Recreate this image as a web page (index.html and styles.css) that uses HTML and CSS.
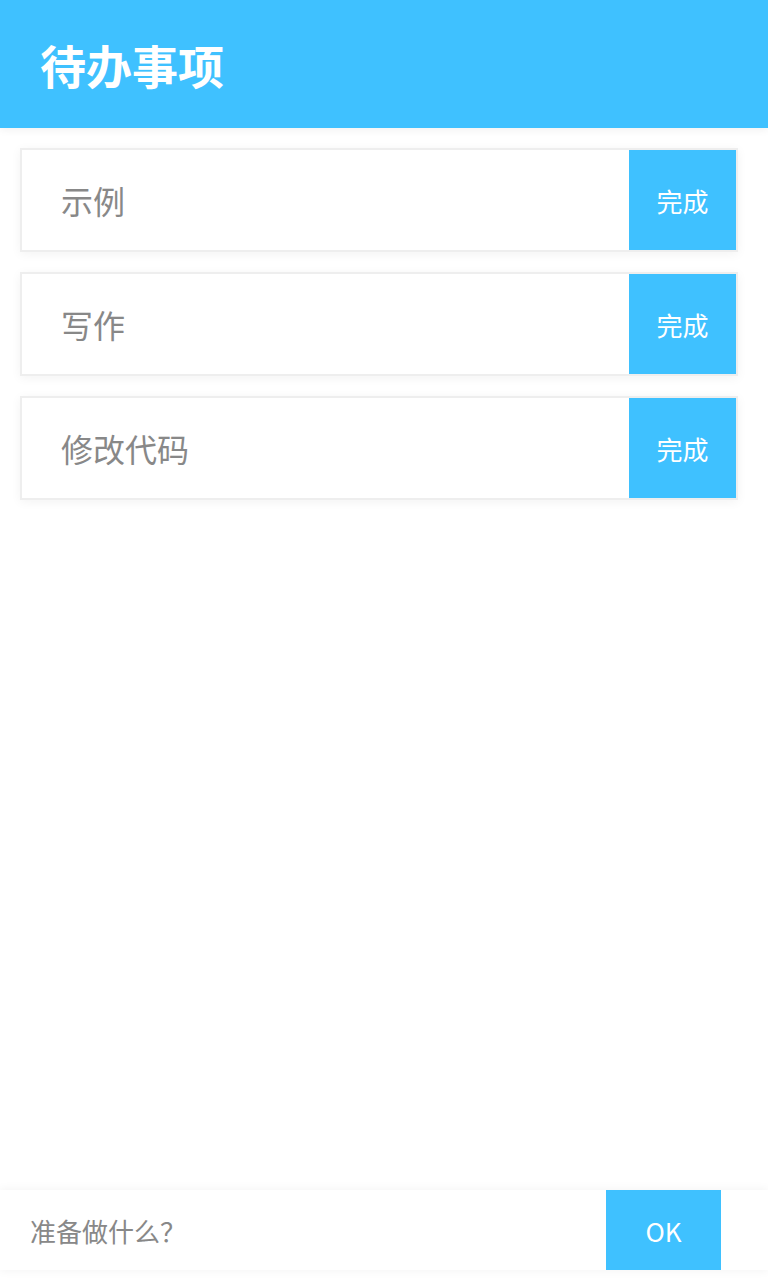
FILE: index.html
```html
<!DOCTYPE html>
<html lang="zh-CN">
<head>
<meta charset="utf-8">
<link rel="stylesheet" href="styles.css">
</head>
<body>
<header class="header"><h1 class="title">待办事项</h1></header>
<main class="list">
  <div class="item"><span class="item-text">示例</span><button class="done">完成</button></div>
  <div class="item"><span class="item-text">写作</span><button class="done">完成</button></div>
  <div class="item"><span class="item-text">修改代码</span><button class="done">完成</button></div>
</main>
<footer class="bar">
  <input class="input" placeholder="准备做什么？">
  <button class="ok">OK</button>
</footer>
</body>
</html>
```
FILE: styles.css
```css
* { box-sizing: border-box; }
html, body { margin: 0; padding: 0; height: 100%; }
body {
  font-family: "Noto Sans CJK SC", "Noto Sans", sans-serif;
  background: #fff;
  display: flex;
  flex-direction: column;
  height: 1280px;
  text-spacing-trim: space-all;
}
.header {
  height: 128px;
  background: #3fc1ff;
  display: flex;
  align-items: center;
  padding-left: 40px;
  box-shadow: 0 2px 8px rgba(0,0,0,0.06);
}
.title {
  margin: 0;
  color: #fff;
  font-size: 46px;
  font-weight: 700;
  line-height: 1;
}
.list {
  flex: 1;
  padding: 20px 30px 0 20px;
  display: flex;
  flex-direction: column;
  gap: 20px;
}
.item {
  height: 104px;
  border: 2px solid #eee;
  display: flex;
  align-items: stretch;
  box-shadow: 0 2px 10px rgba(0,0,0,0.05);
  background: #fff;
}
.item-text {
  flex: 1;
  display: flex;
  align-items: center;
  padding-left: 39px;
  font-size: 32px;
  color: #888;
}
.done {
  width: 107px;
  border: none;
  background: #3fc1ff;
  color: #fff;
  font-family: inherit;
  font-size: 26px;
  padding: 0;
}
.bar {
  height: 80px;
  margin-bottom: 10px;
  display: flex;
  background: #fff;
  box-shadow: 0 0 10px rgba(0,0,0,0.06);
}
.input {
  flex: 1;
  border: none;
  outline: none;
  padding-left: 30px;
  font-family: "Noto Sans CJK SC", sans-serif;
  font-size: 26px;
  color: #888;
  background: transparent;
  text-spacing-trim: space-all;
}
.input::placeholder { color: #888; text-spacing-trim: space-all; }
.ok {
  width: 115px;
  margin-right: 47px;
  border: none;
  background: #3fc1ff;
  color: #fff;
  font-family: inherit;
  font-size: 26px;
  padding: 0;
}
```
